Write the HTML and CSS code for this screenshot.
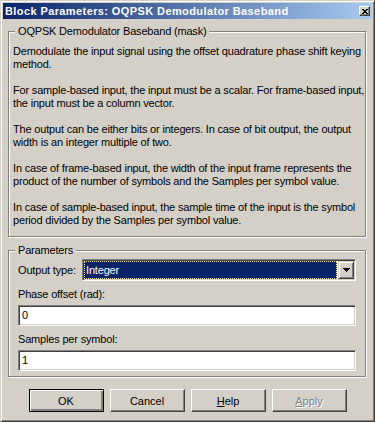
FILE: index.html
```html
<!DOCTYPE html>
<html lang="en">
<head>
  <meta charset="UTF-8">
  <meta name="viewport" content="width=device-width, initial-scale=1.0">
  <title>Block Parameters: OQPSK Demodulator Baseband</title>
  <link rel="stylesheet" href="styles.css">
</head>
<body>
  <div class="window">
    <div class="titlebar">
      <span class="title">Block Parameters: OQPSK Demodulator Baseband</span>
      <span class="close">
        <svg width="6" height="5" viewBox="0 0 6 5">
          <path d="M0 0h2v1H0z M4 0h2v1H4z M1 1h4v1H1z M2 2h2v1H2z M1 3h4v1H1z M0 4h2v1H0z M4 4h2v1H4z" fill="#000"/>
        </svg>
      </span>
    </div>

    <fieldset class="group desc">
      <legend>OQPSK Demodulator Baseband (mask)</legend>
      <p>Demodulate the input signal using the offset quadrature phase shift keying<br>method.</p>
      <p>For sample-based input, the input must be a scalar. For frame-based input,<br>the input must be a column vector.</p>
      <p>The output can be either bits or integers. In case of bit output, the output<br>width is an integer multiple of two.</p>
      <p>In case of frame-based input, the width of the input frame represents the<br>product of the number of symbols and the Samples per symbol value.</p>
      <p>In case of sample-based input, the sample time of the input is the symbol<br>period divided by the Samples per symbol value.</p>
    </fieldset>

    <fieldset class="group params">
      <legend>Parameters</legend>
      <div class="combo-row">
        <span class="combo-label">Output type:</span>
        <div class="combo">
          <span class="combo-value">Integer</span>
          <span class="combo-drop">
            <svg width="7" height="4" viewBox="0 0 7 4">
              <path d="M0 0h7v1H0z M1 1h5v1H1z M2 2h3v1H2z M3 3h1v1H3z" fill="#000"/>
            </svg>
          </span>
        </div>
      </div>
      <div class="field-label">Phase offset (rad):</div>
      <div class="edit">0</div>
      <div class="field-label">Samples per symbol:</div>
      <div class="edit">1</div>
    </fieldset>

    <div class="buttons">
      <button class="btn default">OK</button>
      <button class="btn">Cancel</button>
      <button class="btn"><u>H</u>elp</button>
      <button class="btn disabled"><u>A</u>pply</button>
    </div>
  </div>
</body>
</html>
```

FILE: styles.css
```css
/* Classic grey dialog */
body {
  margin: 0;
  background: #d4d0c8;
  font-family: "Liberation Sans", Arial, sans-serif;
  font-size: 11px;
  line-height: 13px;
  color: #000;
}

.window {
  box-sizing: border-box;
  width: 375px;
  height: 422px;
  padding: 2px;
  background: #d4d0c8;
  border: 1px solid;
  border-color: #d4d0c8 #404040 #404040 #d4d0c8;
  box-shadow: inset 1px 1px #fff, inset -1px -1px #808080;
}

/* Title bar */
.titlebar {
  display: flex;
  align-items: center;
  justify-content: space-between;
  height: 16px;
  padding: 0 2px;
  background: linear-gradient(to right, #0a246a, #a6caf0);
  color: #fff;
  font-weight: bold;
  letter-spacing: 0.4px;
}

.close {
  box-sizing: border-box;
  display: flex;
  align-items: center;
  justify-content: center;
  width: 11px;
  height: 10px;
  background: #d4d0c8;
  border: 1px solid;
  border-color: #fff #404040 #404040 #fff;
  box-shadow: inset -1px -1px #808080;
}

.close svg,
.combo-drop svg {
  display: block;
}

/* Group boxes */
.group {
  margin: 0 6px 0 5px;
  min-width: 0;
  border: 1px solid #808080;
  box-shadow: 1px 1px #fff, inset 1px 1px #fff;
  letter-spacing: -0.18px;

  & legend {
    padding: 0 3px;
    background: #d4d0c8;
    line-height: 13px;
  }
}

.desc {
  margin-top: 6px;
  padding: 7px 4px 9px;

  & legend {
    margin-left: 2px;
  }

  & p {
    margin: 0 0 13px;
    white-space: nowrap;
  }

  & p:last-child {
    margin-bottom: 0;
  }
}

.params {
  margin-top: 7px;
  padding: 2px 9px 5px;

  & legend {
    margin-left: -3px;
  }
}

/* Combo box */
.combo-row {
  display: flex;
  align-items: center;
}

.combo-label {
  flex: 0 0 64px;
}

.combo {
  box-sizing: border-box;
  flex: 1;
  display: flex;
  height: 22px;
  background: #fff;
  border: 1px solid;
  border-color: #808080 #fff #fff #808080;
  box-shadow: inset 1px 1px #404040, inset -1px -1px #d4d0c8;
  padding: 1px;
}

.combo-value {
  flex: 1;
  margin-right: 1px;
  padding-left: 1px;
  background: #0a246a;
  color: #fff;
  border: 1px dotted #ffef9a;
  line-height: 16px;
}

.combo-drop {
  box-sizing: border-box;
  display: flex;
  align-items: center;
  justify-content: center;
  width: 16px;
  background: #d4d0c8;
  border: 1px solid;
  border-color: #d4d0c8 #404040 #404040 #d4d0c8;
  box-shadow: inset 1px 1px #fff, inset -1px -1px #808080;
}

/* Edit fields */
.field-label {
  margin-top: 7px;
}

.edit {
  box-sizing: border-box;
  height: 21px;
  margin-top: 4px;
  padding: 0 3px;
  background: #fff;
  border: 1px solid;
  border-color: #808080 #fff #fff #808080;
  box-shadow: inset 1px 1px #404040, inset -1px -1px #d4d0c8;
  line-height: 19px;
}

/* Buttons */
.buttons {
  display: flex;
  justify-content: center;
  gap: 6px;
  margin-top: 12px;
}

.btn {
  box-sizing: border-box;
  width: 75px;
  height: 23px;
  padding: 0;
  background: #d4d0c8;
  border: 1px solid;
  border-color: #fff #404040 #404040 #fff;
  box-shadow: inset -1px -1px #808080;
  font-family: inherit;
  font-size: 11px;
  color: #000;
}

.btn.default {
  border-color: #000;
  box-shadow: inset 1px 1px #fff, inset -1px -1px #808080, inset -2px -2px #808080;
}

.btn.disabled {
  color: #808080;
  text-shadow: 1px 1px 0 #fff;
}
```
